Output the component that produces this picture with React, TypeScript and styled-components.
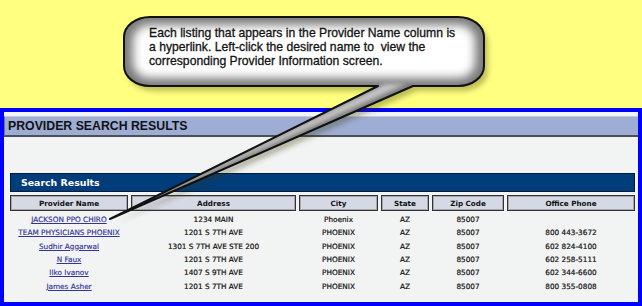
import React from "react";
import styled, { createGlobalStyle } from "styled-components";

const GlobalStyle = createGlobalStyle`
  html, body { margin: 0; padding: 0; }
  body { width: 642px; height: 306px; overflow: hidden; background: #ffff80; }
  * { box-sizing: border-box; }
`;

const Page = styled.div`
  position: relative;
  width: 642px;
  height: 306px;
  display: flex;
  flex-direction: column;
  background: #ffff80;
`;

const TopArea = styled.div`
  height: 108px;
  flex: none;
`;

const Panel = styled.div`
  flex: 1;
  border: 4px solid #0000fe;
  background: #f2f3f3;
  display: flex;
  flex-direction: column;
`;

const TitleBand = styled.div`
  margin-top: 4px;
  height: 21px;
  background: #9eadd3;
  border-top: 1px solid #c3cadc;
  border-bottom: 2px solid #4b4f58;
  border-left: 1px solid #6e7484;
  padding-left: 3px;
  display: flex;
  align-items: center;
  font-family: "Liberation Sans", Arial, sans-serif;
  font-weight: bold;
  font-size: 12.3px;
  color: #111;
`;

const Section = styled.div`
  margin-top: 36px;
  padding: 0 3px 0 6px;
  display: flex;
  flex-direction: column;
`;

const SectionBar = styled.div`
  height: 19px;
  background: #023d7b;
  border: 1px solid #001a3a;
  color: #fff;
  font-family: "DejaVu Sans", Verdana, sans-serif;
  font-weight: bold;
  font-size: 9.4px;
  padding-left: 10px;
  display: flex;
  align-items: center;
`;

const cols = "118px 165px 79px 48px 72px 128px";

const HeadGrid = styled.div`
  display: grid;
  grid-template-columns: ${cols};
  column-gap: 3px;
  margin-top: 3px;
`;

const BodyGrid = styled.div`
  display: grid;
  grid-template-columns: ${cols};
  grid-auto-rows: 13.333px;
  column-gap: 3px;
  margin-top: 2px;
`;

const HeadCell = styled.div`
  height: 16px;
  border: 1px solid #333;
  box-shadow: inset 0 0 0 1px #a3a7b0;
  background: #d5d9e3;
  display: flex;
  align-items: center;
  justify-content: center;
  font-family: "DejaVu Sans", Verdana, sans-serif;
  font-weight: bold;
  font-size: 7.2px;
  color: #111;
`;

const Cell = styled.div`
  display: flex;
  align-items: center;
  justify-content: center;
  font-family: "DejaVu Sans", Verdana, sans-serif;
  font-size: 7.3px;
  color: #111;
  -webkit-text-stroke: 0.2px #111;
  white-space: nowrap;
`;

const NameLink = styled.a`
  color: #333399;
  text-decoration: underline;
  font-family: "DejaVu Sans", Verdana, sans-serif;
  font-size: 7.3px;
  -webkit-text-stroke: 0.15px #333399;
  white-space: nowrap;
`;

const Callout = styled.div`
  position: absolute;
  left: 0;
  top: 0;
  width: 642px;
  height: 306px;
  pointer-events: none;
`;

const CalloutArt = styled.svg`
  position: absolute;
  left: 0;
  top: 0;
`;

const CalloutText = styled.div`
  position: absolute;
  left: 149px;
  top: 26px;
  width: 320px;
  font-family: "Liberation Sans", Arial, sans-serif;
  font-size: 12.2px;
  line-height: 14px;
  color: #141414;
  -webkit-text-stroke: 0.3px #141414;
  white-space: pre;
`;

const rows = [
  ["JACKSON PPO CHIRO", "1234 MAIN", "Phoenix", "AZ", "85007", ""],
  ["TEAM PHYSICIANS PHOENIX", "1201 S 7TH AVE", "PHOENIX", "AZ", "85007", "800 443-3672"],
  ["Sudhir Aggarwal", "1301 S 7TH AVE STE 200", "PHOENIX", "AZ", "85007", "602 824-4100"],
  ["N Faux", "1201 S 7TH AVE", "PHOENIX", "AZ", "85007", "602 258-5111"],
  ["Ilko Ivanov", "1407 S 9TH AVE", "PHOENIX", "AZ", "85007", "602 344-6600"],
  ["James Asher", "1201 S 7TH AVE", "PHOENIX", "AZ", "85007", "800 355-0808"],
];

const headers = ["Provider Name", "Address", "City", "State", "Zip Code", "Office Phone"];

const BUBBLE =
  "M 150 17 H 458 A 26 20 0 0 1 484 37 V 66 A 26 20 0 0 1 458 86 H 413 L 110 219 L 378 86 H 150 A 26 20 0 0 1 124 66 V 37 A 26 20 0 0 1 150 17 Z";

export default function App() {
  return (
    <Page>
      <GlobalStyle />
      <TopArea />
      <Panel>
        <TitleBand>PROVIDER SEARCH RESULTS</TitleBand>
        <Section>
          <SectionBar>Search Results</SectionBar>
          <HeadGrid>
            {headers.map((h) => (
              <HeadCell key={h}>{h}</HeadCell>
            ))}
          </HeadGrid>
          <BodyGrid>
            {rows.map((r) => (
              <React.Fragment key={r[0]}>
                <Cell>
                  <NameLink href="#">{r[0]}</NameLink>
                </Cell>
                {r.slice(1).map((v, i) => (
                  <Cell key={i}>{v}</Cell>
                ))}
              </React.Fragment>
            ))}
          </BodyGrid>
        </Section>
      </Panel>
      <Callout>
        <CalloutArt width="642" height="306" viewBox="0 0 642 306">
          <defs>
            <clipPath id="bubbleClip">
              <path d={BUBBLE} />
            </clipPath>
            <filter id="shadowBlur" x="-20%" y="-20%" width="140%" height="160%">
              <feGaussianBlur stdDeviation="2.5" />
            </filter>
            <filter id="glow" x="-20%" y="-50%" width="140%" height="200%">
              <feGaussianBlur stdDeviation="5" />
            </filter>
            <filter id="tailGlow" x="-20%" y="-20%" width="140%" height="140%">
              <feGaussianBlur stdDeviation="2" />
            </filter>
          </defs>
          <path d={BUBBLE} fill="rgba(50,50,0,0.32)" transform="translate(4 5)" filter="url(#shadowBlur)" />
          <g clipPath="url(#bubbleClip)">
            <path d={BUBBLE} fill="#7a7a7a" />
            <rect x="133" y="25" width="342" height="53" rx="16" fill="#ffffff" filter="url(#glow)" />
            <polygon points="385,84 406,84 114,216" fill="#c4c4c4" filter="url(#tailGlow)" />
          </g>
          <path d={BUBBLE} fill="none" stroke="#111" strokeWidth="2" strokeLinejoin="round" />
        </CalloutArt>
        <CalloutText>
          {"Each listing that appears in the Provider Name column is\na hyperlink. Left-click the desired name to  view the\ncorresponding Provider Information screen."}
        </CalloutText>
      </Callout>
    </Page>
  );
}
